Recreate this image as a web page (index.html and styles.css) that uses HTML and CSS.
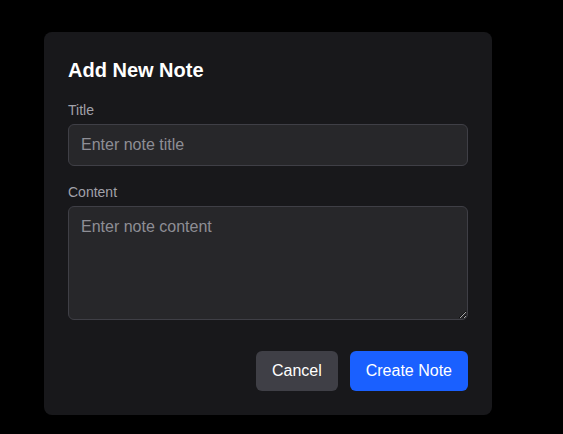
FILE: index.html
```html
<!DOCTYPE html>
<html lang="en">
<head>
<meta charset="utf-8">
<title>Add New Note</title>
<link rel="stylesheet" href="styles.css">
</head>
<body>
<div class="modal">
  <h2 class="modal-title">Add New Note</h2>
  <div class="field">
    <label class="label" for="title">Title</label>
    <input class="input" id="title" type="text" placeholder="Enter note title">
  </div>
  <div class="field">
    <label class="label" for="content">Content</label>
    <textarea class="input textarea" id="content" rows="4" placeholder="Enter note content"></textarea>
  </div>
  <div class="actions">
    <button class="btn btn-cancel" type="button">Cancel</button>
    <button class="btn btn-primary" type="button">Create Note</button>
  </div>
</div>
</body>
</html>
```
FILE: styles.css
```css
* { box-sizing: border-box; }
html, body { margin: 0; padding: 0; background: #000; }
body {
  font-family: "Liberation Sans", Arial, sans-serif;
  color: #fff;
  height: 434px;
  overflow: hidden;
}
.modal {
  width: 448px;
  margin: 32px 0 0 44px;
  background: #18181b;
  border-radius: 8px;
  padding: 24px;
}
.modal-title {
  margin: 0 0 16px;
  font-size: 20px;
  line-height: 28px;
  font-weight: 700;
  color: #fff;
}
.field { margin-bottom: 16px; }
.label {
  display: block;
  font-size: 14px;
  line-height: 20px;
  color: #a1a1aa;
  margin-bottom: 4px;
}
.input {
  display: block;
  width: 100%;
  background: #27272a;
  border: 1px solid #3f3f46;
  border-radius: 6px;
  padding: 8px 12px;
  font-family: inherit;
  font-size: 16px;
  line-height: 24px;
  color: #fff;
  outline: none;
  margin: 0;
}
.input::placeholder { color: #8e8e95; }
.textarea { height: 114px; resize: vertical; }
.actions {
  display: flex;
  justify-content: flex-end;
  gap: 12px;
  margin-top: 31px;
}
.btn {
  font-family: inherit;
  font-size: 16px;
  line-height: 24px;
  padding: 8px 16px;
  border: none;
  border-radius: 6px;
  color: #fff;
  cursor: pointer;
}
.btn-cancel { background: #3f3f46; }
.btn-primary { background: #1a60ff; }
```
